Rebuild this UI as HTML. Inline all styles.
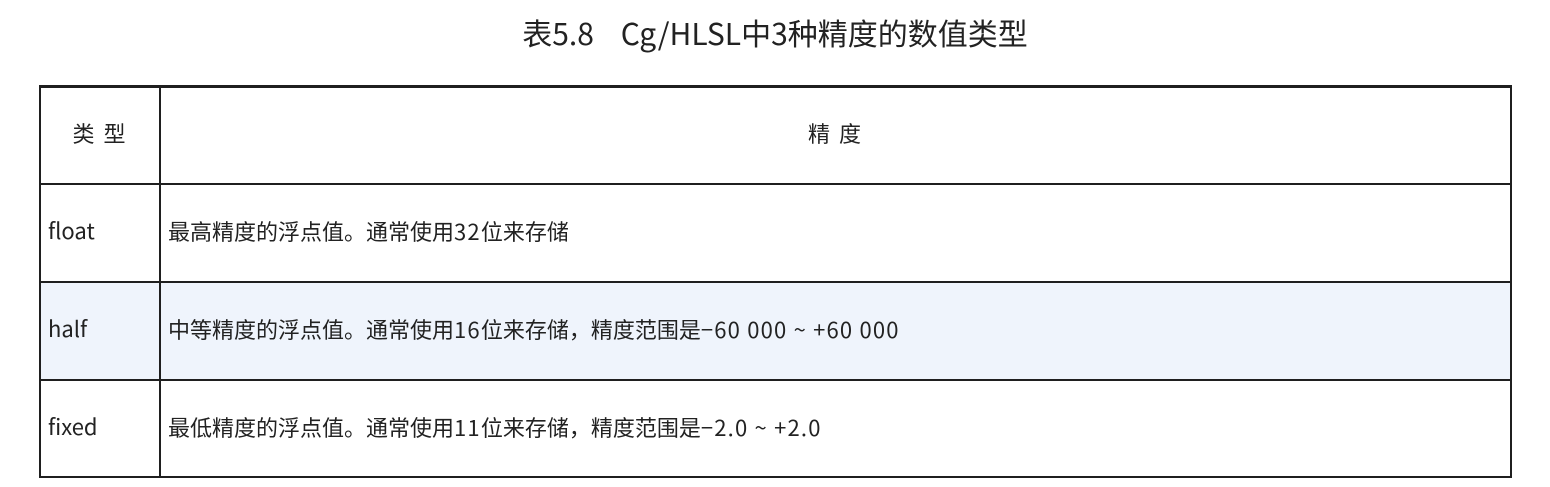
<!DOCTYPE html>
<html><head><meta charset="utf-8"><style>
body{margin:0;width:1550px;height:487px;background:#fff;position:relative;overflow:hidden;font-family:"Noto Sans CJK SC","Liberation Sans",sans-serif;color:#222}
.a{position:absolute}
.h{background:#1f1f1f}
.t{position:absolute;font-size:22px;line-height:26px;white-space:nowrap}
.l{letter-spacing:1.2px}
</style></head><body>
<div class="t" style="left:0;width:1550px;top:13px;text-align:center;font-size:30px;line-height:38px;">表5.8&nbsp;&nbsp;&nbsp;&nbsp;Cg/HLSL中3种精度的数值类型</div>
<div class="a" style="left:40px;top:282px;width:1471px;height:98px;background:#eff4fc"></div>
<div class="a h" style="left:39px;top:85px;width:1473px;height:3px"></div>
<div class="a h" style="left:39px;top:85px;width:2px;height:393px"></div>
<div class="a h" style="left:1510px;top:85px;width:2px;height:393px"></div>
<div class="a h" style="left:159px;top:85px;width:2px;height:393px"></div>
<div class="a h" style="left:39px;top:183px;width:1473px;height:2px"></div>
<div class="a h" style="left:39px;top:281px;width:1473px;height:2px"></div>
<div class="a h" style="left:39px;top:379px;width:1473px;height:2px"></div>
<div class="a h" style="left:39px;top:476px;width:1473px;height:2px"></div>
<div class="t" style="left:40px;width:120px;top:120px;text-align:center;letter-spacing:2px">类 型</div>
<div class="t" style="left:160px;width:1351px;top:120px;text-align:center;letter-spacing:2px">精 度</div>
<div class="t" style="left:48px;top:217px">float</div>
<div class="t" style="left:168px;top:218px">最高精度的浮点值。通常使用<span class="l">32</span>位来存储</div>
<div class="t" style="left:48px;top:315px">half</div>
<div class="t" style="left:168px;top:316px">中等精度的浮点值。通常使用<span class="l">16</span>位来存储，精度范围是<span class="l">−60 000 ~ +60 000</span></div>
<div class="t" style="left:48px;top:413px">fixed</div>
<div class="t" style="left:168px;top:414px">最低精度的浮点值。通常使用<span class="l">11</span>位来存储，精度范围是<span class="l">−2.0 ~ +2.0</span></div>
</body></html>
